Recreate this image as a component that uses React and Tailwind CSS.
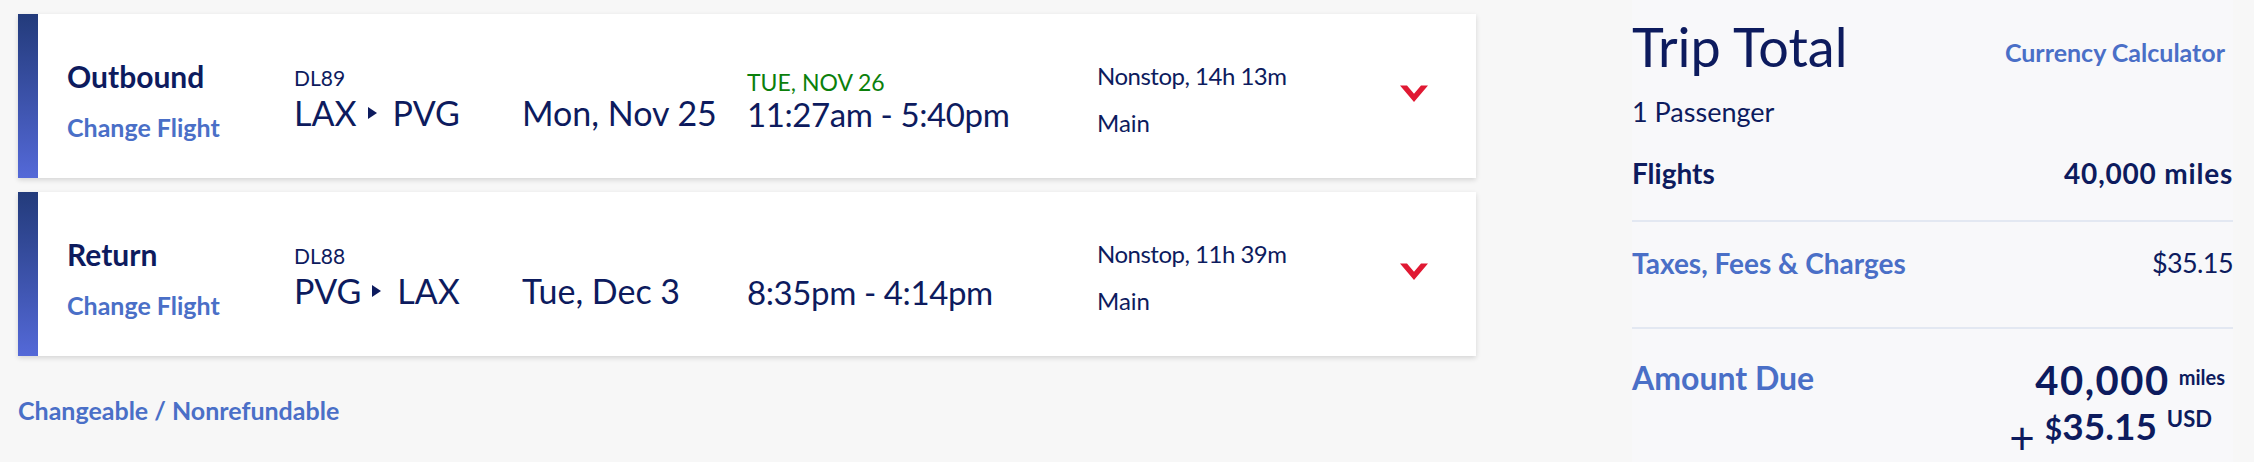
const flights = [
  {
    label: "Outbound",
    number: "DL89",
    from: "LAX",
    to: "PVG",
    date: "Mon, Nov 25",
    arrival: "TUE, NOV 26",
    time: "11:27am - 5:40pm",
    duration: "Nonstop, 14h 13m",
    cabin: "Main",
  },
  {
    label: "Return",
    number: "DL88",
    from: "PVG",
    to: "LAX",
    date: "Tue, Dec 3",
    arrival: null,
    time: "8:35pm - 4:14pm",
    duration: "Nonstop, 11h 39m",
    cabin: "Main",
  },
];

const Chevron = () => (
  <svg width="28" height="17" viewBox="0 0 28 17">
    <polygon points="0,0.5 7,0.5 14,8.8 21,0.5 28,0.5 14,17" fill="#e01933" />
  </svg>
);

const Arrow = () => (
  <svg width="9" height="12" viewBox="0 0 9 12" className="ml-[11px] mr-[16px]">
    <polygon points="0,0 9,6 0,12" fill="#0d1b5e" />
  </svg>
);

const FlightCard = ({ f }) => (
  <div className="flex h-[164px] bg-white shadow-[0_2px_5px_rgba(0,0,0,0.14)]">
    {/* Accent bar */}
    <div className="w-[20px] shrink-0 bg-gradient-to-b from-[#233b7b] to-[#5469d8]" />

    <div className="flex items-start pl-[29px] text-[#0d1b5e]">
      <div className="w-[227px] pt-[47px]">
        <div className="text-[30px] font-bold leading-none">{f.label}</div>
        <div className="mt-[24px] text-[25px] font-bold leading-none text-[#4a6fc7]">
          Change Flight
        </div>
      </div>

      <div className="w-[228px] pt-[53px]">
        <div className="text-[21px] leading-none">{f.number}</div>
        <div className="mt-[8px] flex items-center text-[34px] leading-none">
          <span>{f.from}</span>
          <Arrow />
          <span>{f.to}</span>
        </div>
      </div>

      <div className="w-[225px] pt-[82px] text-[34px] leading-none">{f.date}</div>

      <div className="w-[350px] pt-[57px]">
        <div className="h-[23px] text-[23px] leading-none text-[#0b800b]">{f.arrival}</div>
        <div className="mt-[4px] text-[33px] leading-none tracking-[-0.4px]">{f.time}</div>
      </div>

      <div className="w-[303px] pt-[50px]">
        <div className="text-[24px] leading-none tracking-[-0.5px]">{f.duration}</div>
        <div className="mt-[23px] text-[24px] leading-none">{f.cabin}</div>
      </div>

      <div className="pt-[71px]">
        <Chevron />
      </div>
    </div>
  </div>
);

export default function App() {
  return (
    <div
      className="flex w-[2254px] h-[462px] bg-[#f7f7f7] text-[#0d1b5e]"
      style={{ fontFamily: "Lato, 'Open Sans', sans-serif" }}
    >
      {/* Flights */}
      <div className="ml-[18px] w-[1458px] pt-[14px]">
        <div className="flex flex-col gap-[14px]">
          {flights.map((f) => (
            <FlightCard key={f.number} f={f} />
          ))}
        </div>
        <div className="mt-[39px] text-[25px] font-bold leading-[30px] text-[#4a6fc7]">
          Changeable / Nonrefundable
        </div>
      </div>

      {/* Trip total */}
      <div className="ml-[156px] w-[601px] bg-[#f8f8fa]">
        <div className="flex items-start justify-between pt-[20px]">
          <div className="text-[54px] leading-none">Trip Total</div>
          <div className="mt-[20px] mr-[8px] text-[25px] font-bold leading-none text-[#4a6fc7]">
            Currency Calculator
          </div>
        </div>
        <div className="mt-[24px] text-[27px] leading-none">1 Passenger</div>

        <div className="mt-[34px] flex justify-between text-[28px] font-bold leading-none">
          <span>Flights</span>
          <span className="tracking-[0.8px]">40,000 miles</span>
        </div>
        <div className="mt-[33px] h-[2px] bg-[#e3e8f2]" />

        <div className="mt-[27px] flex justify-between text-[28px] leading-none">
          <span className="font-bold text-[#4a6fc7]">Taxes, Fees &amp; Charges</span>
          <span className="text-[27px] tracking-[-0.6px]">$35.15</span>
        </div>
        <div className="mt-[50px] h-[2px] bg-[#e3e8f2]" />

        <div className="mt-[31px] flex items-start justify-between">
          <div className="mt-[2px] text-[32px] font-bold leading-none text-[#4a6fc7]">
            Amount Due
          </div>
          <div className="flex flex-col items-end font-bold">
            <div className="flex items-start pr-[8px]">
              <span className="text-[40px] leading-none tracking-[1.5px]">40,000</span>
              <span className="ml-[9px] mt-[7px] text-[20px] leading-none">miles</span>
            </div>
            <div className="mt-[7px] flex items-start pr-[21px]">
              <span className="mt-[8px] mr-[10px] text-[44px] font-normal leading-none">+</span>
              <span className="flex items-baseline leading-none">
                <span className="text-[30px]">$</span>
                <span className="text-[37px]">35.15</span>
              </span>
              <span className="ml-[10px] mt-[1px] text-[22px] leading-none">USD</span>
            </div>
          </div>
        </div>
      </div>
    </div>
  );
}
